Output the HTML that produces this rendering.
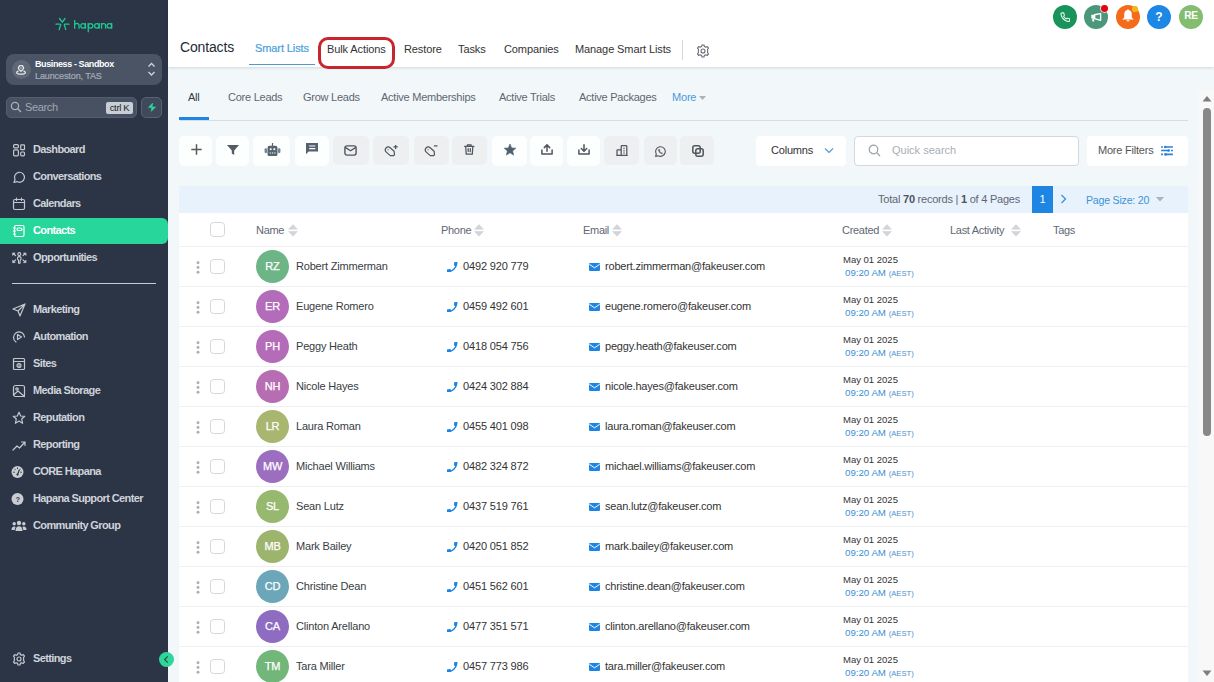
<!DOCTYPE html>
<html><head><meta charset="utf-8"><style>
*{box-sizing:border-box;margin:0;padding:0}
html,body{width:1214px;height:682px;overflow:hidden;font-family:"Liberation Sans",sans-serif;background:#f2f7fa;position:relative}
.a{position:absolute;white-space:nowrap}
#sb{position:absolute;left:0;top:0;width:168px;height:682px;background:#2c3546}
.nav{position:absolute;left:0;width:168px;height:26px;color:#cfd3da;font-size:11px;font-weight:bold;letter-spacing:-0.62px}
.nav span{position:absolute;left:33px;top:7px}
.nav svg{position:absolute;left:12px;top:6.7px}
#hdr{position:absolute;left:168px;top:0;width:1046px;height:67px;background:#fff;box-shadow:0 1px 3px rgba(0,0,0,.13)}
.tab{position:absolute;top:43px;font-size:11px;color:#454b54;letter-spacing:-0.1px}
.stab{position:absolute;top:91px;font-size:11px;color:#5f6670;letter-spacing:-0.25px}
.tb{position:absolute;top:136px;height:31px;border-radius:4px;background:#fff}
.tb.g{background:#eceef0}
.tb svg{position:absolute;left:50%;top:50%;transform:translate(-50%,-50%)}
.row{position:absolute;left:179px;width:1009px;height:40px;border-top:1px solid #eef0f2;background:#fff}
.dots{position:absolute;left:17px;top:13.7px}
.cb{position:absolute;left:31px;top:12px;width:15px;height:15px;border:1px solid #d3d6da;border-radius:3.5px;background:#fff}
.av{position:absolute;left:77px;top:3px;width:33px;height:33px;border-radius:50%;color:#fff;font-size:11px;text-align:center;line-height:33px;-webkit-text-stroke:0.25px #fff;letter-spacing:-0.2px}
.nm{position:absolute;left:117px;top:13px;font-size:11px;color:#383d44;letter-spacing:-0.19px}
.ph{position:absolute;left:284px;top:13px;font-size:11px;color:#333;letter-spacing:-0.15px}
.phi{position:absolute;left:268px;top:14.5px}
.em{position:absolute;left:426px;top:13px;font-size:11px;color:#333;letter-spacing:-0.2px}
.emi{position:absolute;left:409.6px;top:16.3px}
.d1{position:absolute;left:664px;top:6.7px;font-size:9.5px;color:#333}
.d2{position:absolute;left:666px;top:19.5px;font-size:9.7px;color:#3a8fd9}
.d2 small{font-size:7.7px;color:#4f8fcf}
.sort{position:absolute}
</style></head><body>
<div id="sb">
<svg class="a" style="left:55px;top:17px" width="15" height="14" viewBox="0 0 15 14" fill="none" stroke="#1fc595" stroke-width="1.3" stroke-linecap="round">
<path d="M4.5 1.5 L7.3 5.2 L10 1.5 M1 7.2 H5.2 M9.6 7.2 H14 M5.8 7.8 Q4.8 10 4.2 12.5 M9.2 7.8 Q10 10 10.8 12.5"/></svg>
<svg class="a" style="left:0;top:0" width="168" height="40" viewBox="0 0 168 40" fill="none" stroke="#1fc595" stroke-width="1.3"><path d="M74.65 20.1 V28.8 M74.65 25.6 A2.2 2.2 0 0 1 79.05 25.6 V28.8 M85.4 22.9 V28.8 M88.25 22.9 V32.2 M99.15 22.9 V28.8 M101.55 22.9 V28.8 M101.55 25.6 A2.025 2.025 0 0 1 105.6 25.6 V28.8 M111.65 22.9 V28.8"/><circle cx="83.1" cy="25.85" r="2.3"/><circle cx="90.55" cy="25.85" r="2.3"/><circle cx="96.85" cy="25.85" r="2.3"/><circle cx="109.35" cy="25.85" r="2.3"/></svg>
<div class="a" style="left:6px;top:54px;width:156px;height:31px;border-radius:8px;background:#4a5465"></div>
<div class="a" style="left:11.8px;top:60.4px;width:19px;height:19px;border-radius:50%;background:#5f6877"></div>
<svg class="a" style="left:16.2px;top:65px" width="10" height="10" viewBox="0 0 10 10" fill="none" stroke="#e3e6ea" stroke-width="1.3" stroke-linejoin="round"><path d="M5 6.4 L3.3 4.6 A2.4 2.4 0 1 1 6.7 4.6 Z"/><path d="M4.2 3 H5.8" stroke-width="1"/><path d="M2.6 5.9 Q0.7 6.6 0.7 7.6 Q1 9.2 5 9.2 Q9 9.2 9.3 7.6 Q9.3 6.6 7.4 5.9"/></svg>
<div class="a" style="left:35px;top:59px;font-size:9px;font-weight:bold;color:#fff;letter-spacing:-0.4px">Business - Sandbox</div>
<div class="a" style="left:35px;top:71px;font-size:9px;color:#a5acb6;letter-spacing:-0.1px;-webkit-text-stroke:0.2px #a5acb6">Launceston, TAS</div>
<svg class="a" style="left:147px;top:61px" width="9" height="17" viewBox="0 0 9 17" fill="none" stroke="#d0d4da" stroke-width="1.3"><path d="M1.5 5.5 L4.5 2.5 L7.5 5.5 M1.5 11 L4.5 14 L7.5 11"/></svg>
<div class="a" style="left:6px;top:97px;width:131px;height:21px;border-radius:5px;background:#475161;border:1px solid #545e6e"></div>
<svg class="a" style="left:10px;top:101px" width="12" height="12" viewBox="0 0 12 12" fill="none" stroke="#a9b0bb" stroke-width="1.3"><circle cx="5" cy="5" r="3.6"/><path d="M7.7 7.7 L11 11"/></svg>
<div class="a" style="left:25px;top:101px;font-size:11px;color:#a1a8b3;letter-spacing:-0.35px">Search</div>
<div class="a" style="left:106px;top:102px;width:27px;height:12px;border-radius:2px;background:#c9ced6;color:#1c1f24;font-size:9.5px;line-height:12px;text-align:center;letter-spacing:-0.35px">ctrl K</div>
<div class="a" style="left:141px;top:97px;width:21px;height:21px;border-radius:5px;background:#3f4959;border:1px solid #586272"></div>
<svg class="a" style="left:147.8px;top:103.2px" width="8" height="8.5" viewBox="0 0 8 8.5"><path d="M4.6 0 L0.3 4.6 L3.6 4.6 L3.2 8.5 L7.7 3.9 L4.3 3.9 Z" fill="#2fd39e" stroke="#2fd39e" stroke-width="0.5" stroke-linejoin="round"/></svg>
<div class="nav" style="top:136px"><svg width="14" height="15" viewBox="0 0 14 15" fill="none" stroke="#c3c8cf" stroke-width="1.2" stroke-linecap="round" stroke-linejoin="round"><rect x="1.6" y="1.6" width="4.8" height="3.2" rx="1"/><rect x="8.7" y="1.8" width="3.8" height="4.9" rx="0.8"/><rect x="1.6" y="6.9" width="4.8" height="5.9" rx="1"/><rect x="8.7" y="9" width="3.8" height="3.8" rx="1"/></svg><span>Dashboard</span></div>
<div class="nav" style="top:163px"><svg width="14" height="14" viewBox="0 0 14 14" fill="none" stroke="#c3c8cf" stroke-width="1.2" stroke-linecap="round" stroke-linejoin="round"><path d="M2 12.5 L3 9.5 A5 5 0 1 1 5 11.6 Z"/></svg><span>Conversations</span></div>
<div class="nav" style="top:190px"><svg width="14" height="14" viewBox="0 0 14 14" fill="none" stroke="#c3c8cf" stroke-width="1.2" stroke-linecap="round" stroke-linejoin="round"><rect x="1.5" y="2.5" width="11" height="10" rx="1.5"/><path d="M1.5 5.5 H12.5 M4.5 1 V3.5 M9.5 1 V3.5"/></svg><span>Calendars</span></div>
<div class="a" style="left:0;top:217.5px;width:168px;height:26.8px;background:#26d69b;border-radius:0 6px 6px 0"></div>
<div class="nav" style="top:217px;color:#fff"><svg width="14" height="14" viewBox="0 0 14 14" fill="none" stroke="#ffffff" stroke-width="1.2" stroke-linecap="round"><rect x="2.5" y="1.5" width="9.5" height="11" rx="1.5"/><rect x="5" y="4" width="5" height="2.5" rx="1.2"/><path d="M1.5 4 H3.5 M1.5 7 H3.5 M1.5 10 H3.5"/></svg><span>Contacts</span></div>
<div class="nav" style="top:244px"><svg width="15" height="14" viewBox="0 0 15 14" fill="none" stroke="#c9cdd3" stroke-width="1.1" stroke-linecap="round" stroke-linejoin="round" style="left:12.3px"><circle cx="7.3" cy="3.1" r="1.5"/><path d="M6.5 12.1 V9.3 Q5 8 5.6 6.6 Q6.1 5.6 7.3 5.6 Q8.5 5.6 9 6.6 Q9.6 8 8.1 9.3 V12.1 Z"/><g fill="#c9cdd3" stroke-width="0.7"><path d="M0.9 2 H3.1 L0.9 4.2 Z M13.7 2 H11.5 L13.7 4.2 Z M0.9 11.6 H3.1 L0.9 9.4 Z M13.7 11.6 H11.5 L13.7 9.4 Z"/></g><path d="M1.6 2.7 L3.6 4.7 M13 2.7 L11 4.7 M1.6 10.9 L3.6 8.9 M13 10.9 L11 8.9" stroke-width="1.2"/></svg><span>Opportunities</span></div>
<div class="nav" style="top:296px"><svg width="14" height="14" viewBox="0 0 14 14" fill="none" stroke="#c3c8cf" stroke-width="1.2" stroke-linecap="round" stroke-linejoin="round"><path d="M13 1 L1 6 L6 8 L8 13 Z M6 8 L13 1"/></svg><span>Marketing</span></div>
<div class="nav" style="top:323px"><svg width="14" height="14" viewBox="0 0 14 14" fill="none" stroke="#c3c8cf" stroke-width="1.2" stroke-linecap="round" stroke-linejoin="round"><path d="M4 12 A5.5 5.5 0 1 1 12.5 7"/><path d="M5.5 4.5 L9.5 7 L5.5 9.5 Z"/></svg><span>Automation</span></div>
<div class="nav" style="top:350px"><svg width="14" height="14" viewBox="0 0 14 14" fill="none" stroke="#c3c8cf" stroke-width="1.2" stroke-linecap="round" stroke-linejoin="round"><rect x="1.5" y="1.5" width="11" height="11" rx="1"/><path d="M1.5 4.5 H12.5"/><circle cx="7" cy="8.5" r="2"/><path d="M7 6.5 V10.5"/></svg><span>Sites</span></div>
<div class="nav" style="top:377px"><svg width="14" height="14" viewBox="0 0 14 14" fill="none" stroke="#c3c8cf" stroke-width="1.2" stroke-linecap="round" stroke-linejoin="round"><rect x="1.5" y="1.5" width="11" height="11" rx="2"/><circle cx="5" cy="5" r="1.2"/><path d="M1.5 11 L6 7 L12.5 12.5"/></svg><span>Media Storage</span></div>
<div class="nav" style="top:404px"><svg width="14" height="14" viewBox="0 0 14 14" fill="none" stroke="#c3c8cf" stroke-width="1.2" stroke-linecap="round" stroke-linejoin="round"><path d="M7 1.2 L8.7 5 L12.8 5.3 L9.7 8 L10.6 12.3 L7 10 L3.4 12.3 L4.3 8 L1.2 5.3 L5.3 5 Z"/></svg><span>Reputation</span></div>
<div class="nav" style="top:431px"><svg width="14" height="14" viewBox="0 0 14 14" fill="none" stroke="#c3c8cf" stroke-width="1.2" stroke-linecap="round" stroke-linejoin="round"><path d="M1 12 L5 8 L7.5 10 L13 4 M9.5 4 H13 V7.5"/></svg><span>Reporting</span></div>
<div class="nav" style="top:458px"><svg width="14" height="14" viewBox="0 0 14 14" style="left:11px"><circle cx="6.5" cy="7" r="6" fill="#c9cdd3"/><g stroke="#2c3546" stroke-width="1" stroke-linecap="round"><path d="M2.6 7.2 H3.4 M3.7 4.1 L4.2 4.6 M6.5 2.9 V3.6 M9.3 4.1 L8.8 4.6 M10.4 7.2 H9.6"/><path d="M6.5 9.6 L8.2 5.2" stroke-width="1.2"/></g><circle cx="6.5" cy="9.6" r="1.1" fill="#2c3546"/></svg><span>CORE Hapana</span></div>
<div class="nav" style="top:485px"><svg width="14" height="14" viewBox="0 0 14 14" style="left:11px"><circle cx="6.5" cy="7" r="6" fill="#c9cdd3"/><text x="6.5" y="9.7" font-size="7.5" font-weight="bold" text-anchor="middle" fill="#2c3546" font-family="Liberation Sans">?</text></svg><span>Hapana Support Center</span></div>
<div class="nav" style="top:512px"><svg width="16" height="14" viewBox="0 0 16 14" fill="#c9cdd3" style="left:11px"><circle cx="8" cy="4" r="2.2"/><circle cx="3.2" cy="4.8" r="1.7"/><circle cx="12.8" cy="4.8" r="1.7"/><path d="M4.5 12 Q4.5 7.3 8 7.3 Q11.5 7.3 11.5 12 Z"/><path d="M0.5 11 Q0.5 7.5 3.2 7.5 Q4.2 7.5 4.6 8 Q3.8 9.3 3.8 11 Z"/><path d="M15.5 11 Q15.5 7.5 12.8 7.5 Q11.8 7.5 11.4 8 Q12.2 9.3 12.2 11 Z"/></svg><span>Community Group</span></div>
<div class="nav" style="top:645px"><svg width="14" height="14" viewBox="0 0 14 14" fill="none" stroke="#c3c8cf" stroke-width="1.2" stroke-linecap="round" stroke-linejoin="round"><circle cx="7" cy="7" r="2"/><path d="M6 1 H8 L8.4 2.6 L9.8 3.3 L11.3 2.6 L12.5 4.2 L11.5 5.5 L11.7 7 L11.5 8.5 L12.5 9.8 L11.3 11.4 L9.8 10.7 L8.4 11.4 L8 13 H6 L5.6 11.4 L4.2 10.7 L2.7 11.4 L1.5 9.8 L2.5 8.5 L2.3 7 L2.5 5.5 L1.5 4.2 L2.7 2.6 L4.2 3.3 L5.6 2.6 Z"/></svg><span>Settings</span></div>
<div class="a" style="left:12px;top:283px;width:144px;height:1px;background:#c6cbd2"></div>
</div>
<div class="a" style="left:158.8px;top:651.8px;width:15.5px;height:15.5px;border-radius:50%;background:#2fd69c"></div>
<svg class="a" style="left:162.3px;top:655px" width="9" height="9" viewBox="0 0 9 9" fill="none" stroke="#1f4d3e" stroke-width="1.1"><path d="M5.8 1.3 L2.6 4.5 L5.8 7.7"/></svg>
<div id="hdr"></div>
<div class="a" style="left:180px;top:39px;font-size:14px;color:#262a33;letter-spacing:-0.15px">Contacts</div>
<div class="tab" style="left:255px;color:#4a9fdb;top:42.2px;-webkit-text-stroke:0.2px #4a9fdb">Smart Lists</div>
<div class="tab" style="left:327px;color:#333">Bulk Actions</div>
<div class="tab" style="left:404px;color:#333">Restore</div>
<div class="tab" style="left:458px;color:#333">Tasks</div>
<div class="tab" style="left:504px;color:#333">Companies</div>
<div class="tab" style="left:575px;color:#333">Manage Smart Lists</div>
<div class="a" style="left:249px;top:63.5px;width:66px;height:1.5px;background:#4b98d3"></div>
<div class="a" style="left:318px;top:37px;width:77px;height:32px;border:3.2px solid #c9252c;border-radius:10px"></div>
<div class="a" style="left:682px;top:39.5px;width:1px;height:20px;background:#d5d8dc"></div>
<svg class="a" style="left:695.5px;top:43.5px" width="14" height="14" viewBox="0 0 14 14" fill="none" stroke="#666d75" stroke-width="1.1" stroke-linejoin="round"><circle cx="7" cy="7" r="2"/><path d="M6 1 H8 L8.4 2.6 L9.8 3.3 L11.3 2.6 L12.5 4.2 L11.5 5.5 L11.7 7 L11.5 8.5 L12.5 9.8 L11.3 11.4 L9.8 10.7 L8.4 11.4 L8 13 H6 L5.6 11.4 L4.2 10.7 L2.7 11.4 L1.5 9.8 L2.5 8.5 L2.3 7 L2.5 5.5 L1.5 4.2 L2.7 2.6 L4.2 3.3 L5.6 2.6 Z"/></svg>
<div class="a" style="left:1053px;top:5px;width:24px;height:24px;border-radius:50%;background:#18945a"></div>
<div class="a" style="left:1084px;top:5px;width:24px;height:24px;border-radius:50%;background:#4c977b"></div>
<div class="a" style="left:1115.7px;top:5px;width:24px;height:24px;border-radius:50%;background:#f46c1b"></div>
<div class="a" style="left:1147px;top:5px;width:24px;height:24px;border-radius:50%;background:#1d87e6"></div>
<div class="a" style="left:1179px;top:5px;width:24px;height:24px;border-radius:50%;background:#83bd70"></div>
<svg class="a" style="left:1059.8px;top:11.6px" width="10.5" height="10.5" viewBox="0 0 24 24" fill="none" stroke="#e6f8ee" stroke-width="2.3" stroke-linecap="round" stroke-linejoin="round"><path d="M22 16.92v3a2 2 0 0 1-2.18 2 19.79 19.79 0 0 1-8.63-3.07 19.5 19.5 0 0 1-6-6 19.79 19.79 0 0 1-3.07-8.67A2 2 0 0 1 4.11 2h3a2 2 0 0 1 2 1.72 12.84 12.84 0 0 0 .7 2.81 2 2 0 0 1-.45 2.11L8.09 9.91a16 16 0 0 0 6 6l1.27-1.27a2 2 0 0 1 2.11-.45 12.84 12.84 0 0 0 2.81.7A2 2 0 0 1 22 16.92z"/></svg>
<svg class="a" style="left:1091px;top:13.3px" width="11" height="8.5" viewBox="0 0 11 8.5"><path d="M0.3 2.2 Q0.3 1.8 0.7 1.8 H3.6 V5.6 H0.7 Q0.3 5.6 0.3 5.2 Z" fill="#fff"/><path d="M3.6 1.8 L9.6 0.5 V7.3 L3.6 5.6 Z" fill="none" stroke="#fff" stroke-width="1.4" stroke-linejoin="round"/><rect x="1.3" y="5.4" width="1.9" height="3.1" fill="#fff"/></svg>
<div class="a" style="left:1101px;top:5px;width:6.8px;height:6.8px;border-radius:50%;background:#e8000e;box-shadow:0 0 0 0.7px #fff"></div>
<svg class="a" style="left:1122px;top:9px" width="12" height="13" viewBox="0 0 12 13" fill="#fff"><path d="M6 0.3 Q6.7 0.3 6.7 1 Q9.8 1.6 9.8 5.5 V8.6 L11.7 10.5 H0.3 L2.2 8.6 V5.5 Q2.2 1.6 5.3 1 Q5.3 0.3 6 0.3 Z"/><path d="M4.4 11.2 H7.6 Q7.4 12.6 6 12.6 Q4.6 12.6 4.4 11.2 Z"/></svg>
<div class="a" style="left:1132.2px;top:6.2px;width:5.7px;height:5.7px;border-radius:50%;background:#f2b51a"></div>
<div class="a" style="left:1153px;top:10px;width:12px;font-size:12px;font-weight:bold;color:#fff;text-align:center">?</div>
<div class="a" style="left:1179px;top:10.3px;width:24px;font-size:10.2px;font-weight:bold;color:#fff;text-align:center;letter-spacing:-0.4px">RE</div>
<div class="stab" style="left:188px;color:#333a42">All</div>
<div class="stab" style="left:228px;color:#5f6670">Core Leads</div>
<div class="stab" style="left:303px;color:#5f6670">Grow Leads</div>
<div class="stab" style="left:381px;color:#5f6670">Active Memberships</div>
<div class="stab" style="left:499px;color:#5f6670">Active Trials</div>
<div class="stab" style="left:579px;color:#5f6670">Active Packages</div>
<div class="stab" style="left:672px;color:#4a9ad9;letter-spacing:-0.2px">More</div>
<svg class="a" style="left:698.5px;top:95.5px" width="7" height="4.5" viewBox="0 0 8 5"><path d="M0 0 H8 L4 4.5 Z" fill="#a9b3be"/></svg>
<div class="a" style="left:180px;top:120px;width:1008px;height:1px;background:#d8dde3"></div>
<div class="a" style="left:179px;top:117px;width:30px;height:2.7px;background:#1e86e2"></div>
<div class="a" style="left:179px;top:136px;width:33px;height:30px;border-radius:5px;background:#fdfefe"></div>
<div class="a" style="left:190.5px;top:144px;line-height:0"><svg width="11" height="11" viewBox="0 0 11 11"><path d="M5.5 0.3 V10.7 M0.3 5.5 H10.7" stroke="#55595e" stroke-width="1.5"/></svg></div>
<div class="a" style="left:216px;top:136px;width:33px;height:30px;border-radius:5px;background:#fdfefe"></div>
<div class="a" style="left:226.7px;top:144.8px;line-height:0"><svg width="12" height="10" viewBox="0 0 12 10"><path d="M0 0 H12 L7.2 5.4 V10 L4.8 8.6 V5.4 Z" fill="#555b62"/></svg></div>
<div class="a" style="left:253px;top:136px;width:37px;height:30px;border-radius:5px;background:#fdfefe"></div>
<div class="a" style="left:263.6px;top:142.5px;line-height:0"><svg width="17" height="13.5" viewBox="0 0 17 13.5" fill="#56626d"><rect x="3.5" y="2.8" width="10" height="10.5" rx="2.3"/><rect x="7.9" y="0" width="1.2" height="3"/><rect x="0.6" y="5.2" width="2.4" height="5" rx="1.1" fill="#6f8597"/><rect x="14" y="5.2" width="2.4" height="5" rx="1.1" fill="#6f8597"/><rect x="5.8" y="5.3" width="1.8" height="1.8" fill="#fff"/><rect x="9.4" y="5.3" width="1.8" height="1.8" fill="#fff"/><rect x="5.6" y="9.5" width="1.3" height="1" fill="#fff"/><rect x="7.9" y="9.5" width="1.3" height="1" fill="#fff"/><rect x="10.2" y="9.5" width="1.3" height="1" fill="#fff"/></svg></div>
<div class="a" style="left:295px;top:136px;width:34px;height:30px;border-radius:5px;background:#fdfefe"></div>
<div class="a" style="left:305.8px;top:143.2px;line-height:0"><svg width="12.5" height="11.5" viewBox="0 0 12.5 11.5"><path d="M0 0.3 Q0 0 0.3 0 H12.2 Q12.5 0 12.5 0.3 V8.6 H2.6 L0 11.3 Z" fill="#55616c"/><path d="M3.2 3 H9.3 M3.2 5.6 H9.3" stroke="#fff" stroke-width="1.1"/></svg></div>
<div class="a" style="left:333px;top:136px;width:36px;height:29px;border-radius:5px;background:#eeeff0"></div>
<div class="a" style="left:344.2px;top:145.2px;line-height:0"><svg width="13" height="11" viewBox="0 0 13 11" fill="none" stroke="#50565d" stroke-width="1.5" stroke-linecap="round" stroke-linejoin="round"><rect x="0.9" y="0.9" width="11.2" height="9.2" rx="2" stroke-width="1.4"/><path d="M1.6 2.6 L6.5 5.8 L11.4 2.6" stroke-width="1.3"/></svg></div>
<div class="a" style="left:373px;top:136px;width:36px;height:29px;border-radius:5px;background:#eeeff0"></div>
<div class="a" style="left:384px;top:144.5px;line-height:0"><svg width="14" height="12" viewBox="0 0 14 12" fill="none" stroke="#50565d" stroke-width="1.5" stroke-linecap="round" stroke-linejoin="round"><path d="M-5.4 0 Q-5.4 -2.9 -2.5 -2.9 H2.8 L5.4 -0.6 V0.6 L2.8 2.9 H-2.5 Q-5.4 2.9 -5.4 0 Z" transform="translate(6.1,6.6) rotate(42)" stroke-width="1.2"/><circle cx="4.1" cy="4.8" r="0.6" fill="#50565d" stroke="none"/><path d="M11.6 0.1 V3.5 M9.9 1.8 H13.3" stroke-width="1.3"/></svg></div>
<div class="a" style="left:414px;top:136px;width:35px;height:29px;border-radius:5px;background:#eeeff0"></div>
<div class="a" style="left:424px;top:144.5px;line-height:0"><svg width="14" height="12" viewBox="0 0 14 12" fill="none" stroke="#50565d" stroke-width="1.5" stroke-linecap="round" stroke-linejoin="round"><path d="M-5.4 0 Q-5.4 -2.9 -2.5 -2.9 H2.8 L5.4 -0.6 V0.6 L2.8 2.9 H-2.5 Q-5.4 2.9 -5.4 0 Z" transform="translate(6.1,6.6) rotate(42)" stroke-width="1.2"/><circle cx="4.1" cy="4.8" r="0.6" fill="#50565d" stroke="none"/><path d="M10.4 0.9 H13" stroke-width="1.2"/></svg></div>
<div class="a" style="left:452px;top:136px;width:35px;height:29px;border-radius:5px;background:#eeeff0"></div>
<div class="a" style="left:464.2px;top:143.9px;line-height:0"><svg width="10.5" height="11" viewBox="0 0 10.5 11" fill="none" stroke="#50565d" stroke-width="1.5" stroke-linecap="round" stroke-linejoin="round"><path d="M0.6 2.3 H9.9 M3.4 2.2 V0.8 H7.1 V2.2 M1.7 2.5 L2.2 10.2 H8.3 L8.8 2.5 M4.2 4.6 V7.6 M6.3 4.6 V7.6" stroke-width="1.25"/></svg></div>
<div class="a" style="left:492px;top:136px;width:35px;height:30px;border-radius:5px;background:#fdfefe"></div>
<div class="a" style="left:503.8px;top:144.3px;line-height:0"><svg width="12" height="11.3" viewBox="0 0 12 11.3"><path d="M6 0 L7.6 3.9 L11.8 4.2 L8.6 6.9 L9.6 11.1 L6 8.8 L2.4 11.1 L3.4 6.9 L0.2 4.2 L4.4 3.9 Z" fill="#4f5f6c" stroke="#4f5f6c" stroke-width="0.6" stroke-linejoin="round"/></svg></div>
<div class="a" style="left:530px;top:136px;width:33px;height:30px;border-radius:5px;background:#fdfefe"></div>
<div class="a" style="left:541.4px;top:143.9px;line-height:0"><svg width="12" height="11" viewBox="0 0 12 11" fill="none" stroke="#50565d" stroke-width="1.5" stroke-linecap="round" stroke-linejoin="round"><path d="M6 7.2 V1.2 M3.3 3.6 L6 0.9 L8.7 3.6 M0.9 6 V10.1 H11.1 V6" stroke-width="1.5"/></svg></div>
<div class="a" style="left:567px;top:136px;width:33px;height:30px;border-radius:5px;background:#fdfefe"></div>
<div class="a" style="left:578px;top:143.9px;line-height:0"><svg width="12" height="11" viewBox="0 0 12 11" fill="none" stroke="#50565d" stroke-width="1.5" stroke-linecap="round" stroke-linejoin="round"><path d="M6 0.8 V6.8 M3.3 4.5 L6 7.2 L8.7 4.5 M0.9 6 V10.1 H11.1 V6" stroke-width="1.5"/></svg></div>
<div class="a" style="left:604px;top:136px;width:35px;height:29px;border-radius:5px;background:#eeeff0"></div>
<div class="a" style="left:615.8px;top:145.2px;line-height:0"><svg width="12" height="11" viewBox="0 0 12 11" fill="none" stroke="#50565d" stroke-width="1.5" stroke-linecap="round" stroke-linejoin="round"><path d="M0.7 10.3 H11.3 M1 10.3 V5.5 Q1 4.8 1.7 4.8 H5.2 M5.2 10.3 V1.5 Q5.2 0.7 6 0.7 H10 Q10.8 0.7 10.8 1.5 V10.3 M8 3.2 V3.6 M8 5.5 V5.9 M8 7.8 V8.2" stroke-width="1.25"/></svg></div>
<div class="a" style="left:644px;top:136px;width:32.5px;height:29px;border-radius:5px;background:#eeeff0"></div>
<div class="a" style="left:654.6px;top:145.6px;line-height:0"><svg width="11" height="11" viewBox="0 0 11 11" fill="none" stroke="#50565d" stroke-width="1.5" stroke-linecap="round" stroke-linejoin="round"><path d="M0.6 10.4 L1.3 7.9 A4.8 4.8 0 1 1 3.1 9.7 Z" stroke-width="1.1"/><path d="M3.6 3.4 Q3.3 3.8 3.6 4.9 Q4.4 6.9 6.4 7.6 Q7.3 7.9 7.7 7.4 L7 6.6 L6.3 6.9 Q5 6.3 4.5 5 L4.9 4.4 L4.4 3.3 Z" fill="#50565d" stroke-width="0.4"/></svg></div>
<div class="a" style="left:680px;top:136px;width:34px;height:29px;border-radius:5px;background:#eeeff0"></div>
<div class="a" style="left:692px;top:144.8px;line-height:0"><svg width="12" height="12" viewBox="0 0 12 12" fill="none" stroke="#50565d" stroke-width="1.5" stroke-linecap="round" stroke-linejoin="round"><rect x="0.8" y="0.8" width="7.4" height="7.4" rx="2"/><rect x="3.8" y="3.8" width="7.4" height="7.4" rx="2"/></svg></div>
<div class="tb" style="left:756px;width:90px;height:29.5px"></div>
<div class="a" style="left:771px;top:144px;font-size:11px;color:#333;letter-spacing:-0.2px">Columns</div>
<svg class="a" style="left:823.5px;top:147px" width="10" height="7" viewBox="0 0 10 7" fill="none" stroke="#4a98d8" stroke-width="1.1"><path d="M1 1.5 L5 5.5 L9 1.5"/></svg>
<div class="a" style="left:854px;top:136px;width:225px;height:30px;border:1px solid #d3d8de;border-radius:4px;background:#fff"></div>
<svg class="a" style="left:868px;top:144px" width="13" height="13" viewBox="0 0 13 13" fill="none" stroke="#9aa1a9" stroke-width="1.2"><circle cx="5.5" cy="5.5" r="4.3"/><path d="M8.7 8.7 L12 12"/></svg>
<div class="a" style="left:892px;top:144px;font-size:11px;color:#a9aeb4">Quick search</div>
<div class="tb" style="left:1087px;width:101px;height:30px"></div>
<div class="a" style="left:1098px;top:144px;font-size:11px;color:#555;letter-spacing:-0.22px">More Filters</div>
<svg class="a" style="left:1160px;top:144px" width="14" height="13" viewBox="0 0 14 13" fill="#2a7fdc" stroke="#2a7fdc" stroke-width="1.6"><path d="M1.1 3 H2.9 M5 3 H12.9 M1.1 6.5 H9.3 M11 6.5 H12.9 M1.1 10.4 H2.9 M5.2 10.4 H12.9"/><circle cx="5.2" cy="3" r="1.3" stroke="none"/><circle cx="8.6" cy="6.5" r="1.3" stroke="none"/><circle cx="5.5" cy="10.4" r="1.3" stroke="none"/></svg>
<div class="a" style="left:179px;top:186px;width:1009px;height:27px;background:#e8f2fc"></div>
<div class="a" style="right:194px;top:193px;font-size:11px;color:#5f6773;letter-spacing:-0.23px">Total <b style="color:#4d545c">70</b> records | <b style="color:#4d545c">1</b> of 4 Pages</div>
<div class="a" style="left:1032px;top:186px;width:21px;height:27px;background:#1e86e2;color:#fff;font-size:11px;line-height:27px;text-align:center">1</div>
<svg class="a" style="left:1060px;top:194px" width="7" height="10" viewBox="0 0 7 10" fill="none" stroke="#3c93d6" stroke-width="1.3"><path d="M1.5 1 L5.5 5 L1.5 9"/></svg>
<div class="a" style="left:1086px;top:193.5px;font-size:10.6px;color:#3c93d6;letter-spacing:-0.22px">Page Size: 20</div>
<svg class="a" style="left:1156px;top:197px" width="8" height="5" viewBox="0 0 8 5"><path d="M0 0 H8 L4 4.5 Z" fill="#a9b3be"/></svg>
<div class="a" style="left:179px;top:213px;width:1009px;height:469px;background:#fff"></div>
<div class="a" style="left:210px;top:222px;width:15px;height:15px;border:1px solid #d3d6da;border-radius:3.5px;background:#fff"></div>
<div class="a" style="left:256px;top:224px;font-size:11px;color:#5f6773;letter-spacing:-0.3px">Name</div>
<svg class="sort" style="left:287.6px;top:223.5px" width="10" height="13" viewBox="0 0 10 13"><path d="M5 0.6 L9.4 5.2 L0.6 5.2 Z M0.6 7.5 L9.4 7.5 L5 12.2 Z" fill="#d2d4d8" stroke="#d2d4d8" stroke-width="0.6" stroke-linejoin="round"/></svg>
<div class="a" style="left:441px;top:224px;font-size:11px;color:#5f6773;letter-spacing:-0.3px">Phone</div>
<svg class="sort" style="left:474.2px;top:223.5px" width="10" height="13" viewBox="0 0 10 13"><path d="M5 0.6 L9.4 5.2 L0.6 5.2 Z M0.6 7.5 L9.4 7.5 L5 12.2 Z" fill="#d2d4d8" stroke="#d2d4d8" stroke-width="0.6" stroke-linejoin="round"/></svg>
<div class="a" style="left:583px;top:224px;font-size:11px;color:#5f6773;letter-spacing:-0.3px">Email</div>
<svg class="sort" style="left:612.2px;top:223.5px" width="10" height="13" viewBox="0 0 10 13"><path d="M5 0.6 L9.4 5.2 L0.6 5.2 Z M0.6 7.5 L9.4 7.5 L5 12.2 Z" fill="#d2d4d8" stroke="#d2d4d8" stroke-width="0.6" stroke-linejoin="round"/></svg>
<div class="a" style="left:842px;top:224px;font-size:11px;color:#5f6773;letter-spacing:-0.3px">Created</div>
<svg class="sort" style="left:882.2px;top:223.5px" width="10" height="13" viewBox="0 0 10 13"><path d="M5 0.6 L9.4 5.2 L0.6 5.2 Z M0.6 7.5 L9.4 7.5 L5 12.2 Z" fill="#d2d4d8" stroke="#d2d4d8" stroke-width="0.6" stroke-linejoin="round"/></svg>
<div class="a" style="left:950px;top:224px;font-size:11px;color:#5f6773;letter-spacing:-0.3px">Last Activity</div>
<svg class="sort" style="left:1011.2px;top:223.5px" width="10" height="13" viewBox="0 0 10 13"><path d="M5 0.6 L9.4 5.2 L0.6 5.2 Z M0.6 7.5 L9.4 7.5 L5 12.2 Z" fill="#d2d4d8" stroke="#d2d4d8" stroke-width="0.6" stroke-linejoin="round"/></svg>
<div class="a" style="left:1053px;top:224px;font-size:11px;color:#5f6773;letter-spacing:-0.3px">Tags</div>
<div class="row" style="top:246px">
<svg class="dots" width="4" height="13" viewBox="0 0 4 13" fill="#a7afb7"><circle cx="2" cy="1.8" r="1.45"/><circle cx="2" cy="6.5" r="1.45"/><circle cx="2" cy="11.2" r="1.45"/></svg>
<div class="cb"></div>
<div class="av" style="background:#6db586">RZ</div>
<div class="nm">Robert Zimmerman</div>
<svg class="phi" width="10.5" height="10.5" viewBox="3 3 18 18"><path transform="translate(24,0) scale(-1,1)" fill="#1e86e2" d="M20.01 15.38c-1.23 0-2.42-.2-3.53-.56-.35-.12-.74-.03-1.01.24l-1.57 1.97c-2.83-1.35-5.48-3.9-6.89-6.83l1.95-1.66c.27-.28.35-.67.24-1.02-.37-1.11-.56-2.3-.56-3.53 0-.54-.45-.99-.99-.99H4.19C3.65 3 3 3.24 3 3.99 3 13.28 10.73 21 20.01 21c.71 0 .99-.63.99-1.18v-3.45c0-.54-.45-.99-.99-.99z"/></svg>
<div class="ph">0492 920 779</div>
<svg class="emi" width="11" height="8" viewBox="0 0 11 8"><rect x="0" y="0" width="11" height="8" rx="1" fill="#1e86e2"/><path d="M0.3 1.3 L5.5 4.8 L10.7 1.3" stroke="#fff" stroke-width="1" fill="none"/></svg>
<div class="em">robert.zimmerman@fakeuser.com</div>
<div class="d1">May 01 2025</div>
<div class="d2">09:20 AM <small>(AEST)</small></div>
</div>
<div class="row" style="top:286px">
<svg class="dots" width="4" height="13" viewBox="0 0 4 13" fill="#a7afb7"><circle cx="2" cy="1.8" r="1.45"/><circle cx="2" cy="6.5" r="1.45"/><circle cx="2" cy="11.2" r="1.45"/></svg>
<div class="cb"></div>
<div class="av" style="background:#b36cb9">ER</div>
<div class="nm">Eugene Romero</div>
<svg class="phi" width="10.5" height="10.5" viewBox="3 3 18 18"><path transform="translate(24,0) scale(-1,1)" fill="#1e86e2" d="M20.01 15.38c-1.23 0-2.42-.2-3.53-.56-.35-.12-.74-.03-1.01.24l-1.57 1.97c-2.83-1.35-5.48-3.9-6.89-6.83l1.95-1.66c.27-.28.35-.67.24-1.02-.37-1.11-.56-2.3-.56-3.53 0-.54-.45-.99-.99-.99H4.19C3.65 3 3 3.24 3 3.99 3 13.28 10.73 21 20.01 21c.71 0 .99-.63.99-1.18v-3.45c0-.54-.45-.99-.99-.99z"/></svg>
<div class="ph">0459 492 601</div>
<svg class="emi" width="11" height="8" viewBox="0 0 11 8"><rect x="0" y="0" width="11" height="8" rx="1" fill="#1e86e2"/><path d="M0.3 1.3 L5.5 4.8 L10.7 1.3" stroke="#fff" stroke-width="1" fill="none"/></svg>
<div class="em">eugene.romero@fakeuser.com</div>
<div class="d1">May 01 2025</div>
<div class="d2">09:20 AM <small>(AEST)</small></div>
</div>
<div class="row" style="top:326px">
<svg class="dots" width="4" height="13" viewBox="0 0 4 13" fill="#a7afb7"><circle cx="2" cy="1.8" r="1.45"/><circle cx="2" cy="6.5" r="1.45"/><circle cx="2" cy="11.2" r="1.45"/></svg>
<div class="cb"></div>
<div class="av" style="background:#b46cb8">PH</div>
<div class="nm">Peggy Heath</div>
<svg class="phi" width="10.5" height="10.5" viewBox="3 3 18 18"><path transform="translate(24,0) scale(-1,1)" fill="#1e86e2" d="M20.01 15.38c-1.23 0-2.42-.2-3.53-.56-.35-.12-.74-.03-1.01.24l-1.57 1.97c-2.83-1.35-5.48-3.9-6.89-6.83l1.95-1.66c.27-.28.35-.67.24-1.02-.37-1.11-.56-2.3-.56-3.53 0-.54-.45-.99-.99-.99H4.19C3.65 3 3 3.24 3 3.99 3 13.28 10.73 21 20.01 21c.71 0 .99-.63.99-1.18v-3.45c0-.54-.45-.99-.99-.99z"/></svg>
<div class="ph">0418 054 756</div>
<svg class="emi" width="11" height="8" viewBox="0 0 11 8"><rect x="0" y="0" width="11" height="8" rx="1" fill="#1e86e2"/><path d="M0.3 1.3 L5.5 4.8 L10.7 1.3" stroke="#fff" stroke-width="1" fill="none"/></svg>
<div class="em">peggy.heath@fakeuser.com</div>
<div class="d1">May 01 2025</div>
<div class="d2">09:20 AM <small>(AEST)</small></div>
</div>
<div class="row" style="top:366px">
<svg class="dots" width="4" height="13" viewBox="0 0 4 13" fill="#a7afb7"><circle cx="2" cy="1.8" r="1.45"/><circle cx="2" cy="6.5" r="1.45"/><circle cx="2" cy="11.2" r="1.45"/></svg>
<div class="cb"></div>
<div class="av" style="background:#b76db2">NH</div>
<div class="nm">Nicole Hayes</div>
<svg class="phi" width="10.5" height="10.5" viewBox="3 3 18 18"><path transform="translate(24,0) scale(-1,1)" fill="#1e86e2" d="M20.01 15.38c-1.23 0-2.42-.2-3.53-.56-.35-.12-.74-.03-1.01.24l-1.57 1.97c-2.83-1.35-5.48-3.9-6.89-6.83l1.95-1.66c.27-.28.35-.67.24-1.02-.37-1.11-.56-2.3-.56-3.53 0-.54-.45-.99-.99-.99H4.19C3.65 3 3 3.24 3 3.99 3 13.28 10.73 21 20.01 21c.71 0 .99-.63.99-1.18v-3.45c0-.54-.45-.99-.99-.99z"/></svg>
<div class="ph">0424 302 884</div>
<svg class="emi" width="11" height="8" viewBox="0 0 11 8"><rect x="0" y="0" width="11" height="8" rx="1" fill="#1e86e2"/><path d="M0.3 1.3 L5.5 4.8 L10.7 1.3" stroke="#fff" stroke-width="1" fill="none"/></svg>
<div class="em">nicole.hayes@fakeuser.com</div>
<div class="d1">May 01 2025</div>
<div class="d2">09:20 AM <small>(AEST)</small></div>
</div>
<div class="row" style="top:406px">
<svg class="dots" width="4" height="13" viewBox="0 0 4 13" fill="#a7afb7"><circle cx="2" cy="1.8" r="1.45"/><circle cx="2" cy="6.5" r="1.45"/><circle cx="2" cy="11.2" r="1.45"/></svg>
<div class="cb"></div>
<div class="av" style="background:#a9b66f">LR</div>
<div class="nm">Laura Roman</div>
<svg class="phi" width="10.5" height="10.5" viewBox="3 3 18 18"><path transform="translate(24,0) scale(-1,1)" fill="#1e86e2" d="M20.01 15.38c-1.23 0-2.42-.2-3.53-.56-.35-.12-.74-.03-1.01.24l-1.57 1.97c-2.83-1.35-5.48-3.9-6.89-6.83l1.95-1.66c.27-.28.35-.67.24-1.02-.37-1.11-.56-2.3-.56-3.53 0-.54-.45-.99-.99-.99H4.19C3.65 3 3 3.24 3 3.99 3 13.28 10.73 21 20.01 21c.71 0 .99-.63.99-1.18v-3.45c0-.54-.45-.99-.99-.99z"/></svg>
<div class="ph">0455 401 098</div>
<svg class="emi" width="11" height="8" viewBox="0 0 11 8"><rect x="0" y="0" width="11" height="8" rx="1" fill="#1e86e2"/><path d="M0.3 1.3 L5.5 4.8 L10.7 1.3" stroke="#fff" stroke-width="1" fill="none"/></svg>
<div class="em">laura.roman@fakeuser.com</div>
<div class="d1">May 01 2025</div>
<div class="d2">09:20 AM <small>(AEST)</small></div>
</div>
<div class="row" style="top:446px">
<svg class="dots" width="4" height="13" viewBox="0 0 4 13" fill="#a7afb7"><circle cx="2" cy="1.8" r="1.45"/><circle cx="2" cy="6.5" r="1.45"/><circle cx="2" cy="11.2" r="1.45"/></svg>
<div class="cb"></div>
<div class="av" style="background:#9c6ebf">MW</div>
<div class="nm">Michael Williams</div>
<svg class="phi" width="10.5" height="10.5" viewBox="3 3 18 18"><path transform="translate(24,0) scale(-1,1)" fill="#1e86e2" d="M20.01 15.38c-1.23 0-2.42-.2-3.53-.56-.35-.12-.74-.03-1.01.24l-1.57 1.97c-2.83-1.35-5.48-3.9-6.89-6.83l1.95-1.66c.27-.28.35-.67.24-1.02-.37-1.11-.56-2.3-.56-3.53 0-.54-.45-.99-.99-.99H4.19C3.65 3 3 3.24 3 3.99 3 13.28 10.73 21 20.01 21c.71 0 .99-.63.99-1.18v-3.45c0-.54-.45-.99-.99-.99z"/></svg>
<div class="ph">0482 324 872</div>
<svg class="emi" width="11" height="8" viewBox="0 0 11 8"><rect x="0" y="0" width="11" height="8" rx="1" fill="#1e86e2"/><path d="M0.3 1.3 L5.5 4.8 L10.7 1.3" stroke="#fff" stroke-width="1" fill="none"/></svg>
<div class="em">michael.williams@fakeuser.com</div>
<div class="d1">May 01 2025</div>
<div class="d2">09:20 AM <small>(AEST)</small></div>
</div>
<div class="row" style="top:486px">
<svg class="dots" width="4" height="13" viewBox="0 0 4 13" fill="#a7afb7"><circle cx="2" cy="1.8" r="1.45"/><circle cx="2" cy="6.5" r="1.45"/><circle cx="2" cy="11.2" r="1.45"/></svg>
<div class="cb"></div>
<div class="av" style="background:#96b96f">SL</div>
<div class="nm">Sean Lutz</div>
<svg class="phi" width="10.5" height="10.5" viewBox="3 3 18 18"><path transform="translate(24,0) scale(-1,1)" fill="#1e86e2" d="M20.01 15.38c-1.23 0-2.42-.2-3.53-.56-.35-.12-.74-.03-1.01.24l-1.57 1.97c-2.83-1.35-5.48-3.9-6.89-6.83l1.95-1.66c.27-.28.35-.67.24-1.02-.37-1.11-.56-2.3-.56-3.53 0-.54-.45-.99-.99-.99H4.19C3.65 3 3 3.24 3 3.99 3 13.28 10.73 21 20.01 21c.71 0 .99-.63.99-1.18v-3.45c0-.54-.45-.99-.99-.99z"/></svg>
<div class="ph">0437 519 761</div>
<svg class="emi" width="11" height="8" viewBox="0 0 11 8"><rect x="0" y="0" width="11" height="8" rx="1" fill="#1e86e2"/><path d="M0.3 1.3 L5.5 4.8 L10.7 1.3" stroke="#fff" stroke-width="1" fill="none"/></svg>
<div class="em">sean.lutz@fakeuser.com</div>
<div class="d1">May 01 2025</div>
<div class="d2">09:20 AM <small>(AEST)</small></div>
</div>
<div class="row" style="top:526px">
<svg class="dots" width="4" height="13" viewBox="0 0 4 13" fill="#a7afb7"><circle cx="2" cy="1.8" r="1.45"/><circle cx="2" cy="6.5" r="1.45"/><circle cx="2" cy="11.2" r="1.45"/></svg>
<div class="cb"></div>
<div class="av" style="background:#9db46d">MB</div>
<div class="nm">Mark Bailey</div>
<svg class="phi" width="10.5" height="10.5" viewBox="3 3 18 18"><path transform="translate(24,0) scale(-1,1)" fill="#1e86e2" d="M20.01 15.38c-1.23 0-2.42-.2-3.53-.56-.35-.12-.74-.03-1.01.24l-1.57 1.97c-2.83-1.35-5.48-3.9-6.89-6.83l1.95-1.66c.27-.28.35-.67.24-1.02-.37-1.11-.56-2.3-.56-3.53 0-.54-.45-.99-.99-.99H4.19C3.65 3 3 3.24 3 3.99 3 13.28 10.73 21 20.01 21c.71 0 .99-.63.99-1.18v-3.45c0-.54-.45-.99-.99-.99z"/></svg>
<div class="ph">0420 051 852</div>
<svg class="emi" width="11" height="8" viewBox="0 0 11 8"><rect x="0" y="0" width="11" height="8" rx="1" fill="#1e86e2"/><path d="M0.3 1.3 L5.5 4.8 L10.7 1.3" stroke="#fff" stroke-width="1" fill="none"/></svg>
<div class="em">mark.bailey@fakeuser.com</div>
<div class="d1">May 01 2025</div>
<div class="d2">09:20 AM <small>(AEST)</small></div>
</div>
<div class="row" style="top:566px">
<svg class="dots" width="4" height="13" viewBox="0 0 4 13" fill="#a7afb7"><circle cx="2" cy="1.8" r="1.45"/><circle cx="2" cy="6.5" r="1.45"/><circle cx="2" cy="11.2" r="1.45"/></svg>
<div class="cb"></div>
<div class="av" style="background:#6ca6b9">CD</div>
<div class="nm">Christine Dean</div>
<svg class="phi" width="10.5" height="10.5" viewBox="3 3 18 18"><path transform="translate(24,0) scale(-1,1)" fill="#1e86e2" d="M20.01 15.38c-1.23 0-2.42-.2-3.53-.56-.35-.12-.74-.03-1.01.24l-1.57 1.97c-2.83-1.35-5.48-3.9-6.89-6.83l1.95-1.66c.27-.28.35-.67.24-1.02-.37-1.11-.56-2.3-.56-3.53 0-.54-.45-.99-.99-.99H4.19C3.65 3 3 3.24 3 3.99 3 13.28 10.73 21 20.01 21c.71 0 .99-.63.99-1.18v-3.45c0-.54-.45-.99-.99-.99z"/></svg>
<div class="ph">0451 562 601</div>
<svg class="emi" width="11" height="8" viewBox="0 0 11 8"><rect x="0" y="0" width="11" height="8" rx="1" fill="#1e86e2"/><path d="M0.3 1.3 L5.5 4.8 L10.7 1.3" stroke="#fff" stroke-width="1" fill="none"/></svg>
<div class="em">christine.dean@fakeuser.com</div>
<div class="d1">May 01 2025</div>
<div class="d2">09:20 AM <small>(AEST)</small></div>
</div>
<div class="row" style="top:606px">
<svg class="dots" width="4" height="13" viewBox="0 0 4 13" fill="#a7afb7"><circle cx="2" cy="1.8" r="1.45"/><circle cx="2" cy="6.5" r="1.45"/><circle cx="2" cy="11.2" r="1.45"/></svg>
<div class="cb"></div>
<div class="av" style="background:#8e6cc1">CA</div>
<div class="nm">Clinton Arellano</div>
<svg class="phi" width="10.5" height="10.5" viewBox="3 3 18 18"><path transform="translate(24,0) scale(-1,1)" fill="#1e86e2" d="M20.01 15.38c-1.23 0-2.42-.2-3.53-.56-.35-.12-.74-.03-1.01.24l-1.57 1.97c-2.83-1.35-5.48-3.9-6.89-6.83l1.95-1.66c.27-.28.35-.67.24-1.02-.37-1.11-.56-2.3-.56-3.53 0-.54-.45-.99-.99-.99H4.19C3.65 3 3 3.24 3 3.99 3 13.28 10.73 21 20.01 21c.71 0 .99-.63.99-1.18v-3.45c0-.54-.45-.99-.99-.99z"/></svg>
<div class="ph">0477 351 571</div>
<svg class="emi" width="11" height="8" viewBox="0 0 11 8"><rect x="0" y="0" width="11" height="8" rx="1" fill="#1e86e2"/><path d="M0.3 1.3 L5.5 4.8 L10.7 1.3" stroke="#fff" stroke-width="1" fill="none"/></svg>
<div class="em">clinton.arellano@fakeuser.com</div>
<div class="d1">May 01 2025</div>
<div class="d2">09:20 AM <small>(AEST)</small></div>
</div>
<div class="row" style="top:646px">
<svg class="dots" width="4" height="13" viewBox="0 0 4 13" fill="#a7afb7"><circle cx="2" cy="1.8" r="1.45"/><circle cx="2" cy="6.5" r="1.45"/><circle cx="2" cy="11.2" r="1.45"/></svg>
<div class="cb"></div>
<div class="av" style="background:#73b679">TM</div>
<div class="nm">Tara Miller</div>
<svg class="phi" width="10.5" height="10.5" viewBox="3 3 18 18"><path transform="translate(24,0) scale(-1,1)" fill="#1e86e2" d="M20.01 15.38c-1.23 0-2.42-.2-3.53-.56-.35-.12-.74-.03-1.01.24l-1.57 1.97c-2.83-1.35-5.48-3.9-6.89-6.83l1.95-1.66c.27-.28.35-.67.24-1.02-.37-1.11-.56-2.3-.56-3.53 0-.54-.45-.99-.99-.99H4.19C3.65 3 3 3.24 3 3.99 3 13.28 10.73 21 20.01 21c.71 0 .99-.63.99-1.18v-3.45c0-.54-.45-.99-.99-.99z"/></svg>
<div class="ph">0457 773 986</div>
<svg class="emi" width="11" height="8" viewBox="0 0 11 8"><rect x="0" y="0" width="11" height="8" rx="1" fill="#1e86e2"/><path d="M0.3 1.3 L5.5 4.8 L10.7 1.3" stroke="#fff" stroke-width="1" fill="none"/></svg>
<div class="em">tara.miller@fakeuser.com</div>
<div class="d1">May 01 2025</div>
<div class="d2">09:20 AM <small>(AEST)</small></div>
</div>
<div class="a" style="left:1199px;top:90px;width:15px;height:592px;background:#f8f8f8"></div>
<div class="a" style="left:1202.5px;top:108px;width:8.5px;height:328px;border-radius:4.5px;background:#888"></div>
<svg class="a" style="left:1201.5px;top:95px" width="10" height="7" viewBox="0 0 10 7"><path d="M0.5 6.5 L5 1 L9.5 6.5 Z" fill="#7d7d7d"/></svg>
<svg class="a" style="left:1201.5px;top:670px" width="10" height="7" viewBox="0 0 10 7"><path d="M0.5 0.5 L5 6 L9.5 0.5 Z" fill="#7d7d7d"/></svg>
</body></html>
